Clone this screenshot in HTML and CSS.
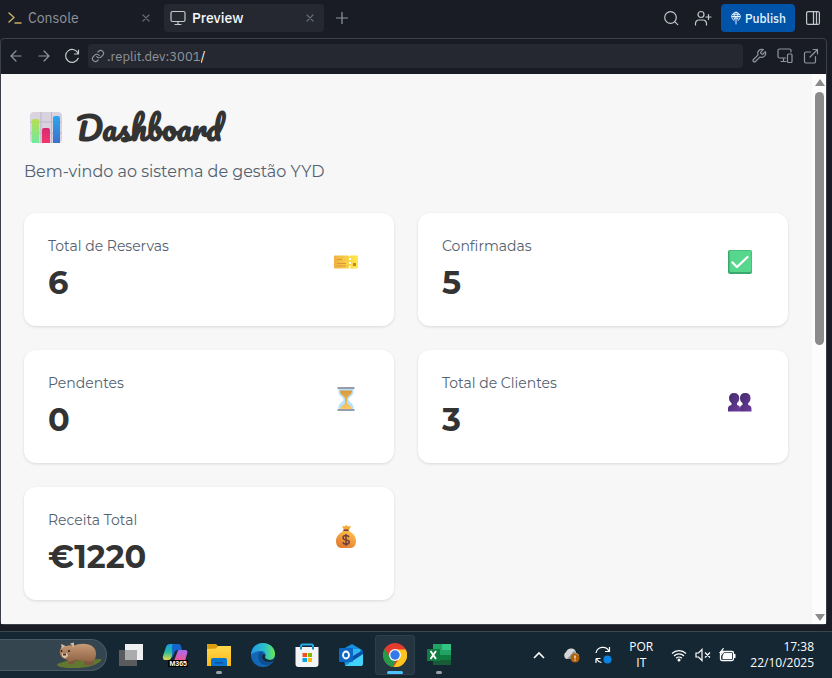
FILE: index.html
```html
<!DOCTYPE html>
<html lang="pt">
<head>
<meta charset="utf-8">
<meta name="viewport" content="width=device-width, initial-scale=1">
<title>Dashboard</title>
<link rel="stylesheet" href="styles.css">
</head>
<body>
<header class="tabbar">
  <nav class="tabs" aria-label="Tabs">
    <div class="tab">
      <button class="tab-name" type="button">
        <svg class="prompt" width="14" height="16" viewBox="0 0 14 16"><path d="M1 3l5 4.500-5 4.500" /><path d="M7 13h6"/></svg>
        Console
      </button>
      <button class="close" type="button" aria-label="Close Console"><svg width="8" height="8" viewBox="0 0 8 8"><path d="M1 1l6 6M7 1L1 7"/></svg></button>
    </div>
    <div class="tab active">
      <button class="tab-name" type="button">
        <svg width="16" height="16" viewBox="0 0 16 16"><rect x="1" y="1.500" width="14" height="10" rx="1.500"/><path d="M8 11.500v3M5 14.500h6"/></svg>
        Preview
      </button>
      <button class="close" type="button" aria-label="Close Preview"><svg width="8" height="8" viewBox="0 0 8 8"><path d="M1 1l6 6M7 1L1 7"/></svg></button>
    </div>
    <button class="icon-btn add" type="button" aria-label="New tab"><svg width="12" height="12" viewBox="0 0 12 12"><path d="M6 0v12M0 6h12"/></svg></button>
  </nav>
  <div class="actions">
    <button class="icon-btn" type="button" aria-label="Search"><svg width="16" height="16" viewBox="0 0 16 16"><circle cx="7.500" cy="7.500" r="5.800"/><path d="M11.700 11.700l3 3"/></svg></button>
    <button class="icon-btn" type="button" aria-label="Invite"><svg width="18" height="16" viewBox="0 0 18 16"><circle cx="7" cy="4.500" r="3"/><path d="M1.500 15v-1.500a3.500 3.500 0 0 1 3.500-3.500h4a3.500 3.500 0 0 1 3.500 3.500V15M14.500 4.500v5M12 7h5"/></svg></button>
    <button class="publish" type="button"><svg width="12" height="14" viewBox="0 0 12 14"><path d="M4 9.500a4.300 4.300 0 1 1 4 0M6 5v8M2 5.500h8M6 1C4 2.500 3.700 5 4.300 8M6 1c2 1.500 2.300 4 1.700 7M3 3.300h6M4.500 8L6 6.500 7.500 8"/></svg>Publish</button>
    <button class="icon-btn" type="button" aria-label="Toggle sidebar"><svg width="14" height="14" viewBox="0 0 14 14"><rect x=".6" y=".6" width="12.800" height="12.800" rx="1.500"/><path d="M7.500 1v12M10.500 1v12"/></svg></button>
  </div>
</header>

<main class="pane">
  <div class="toolbar">
    <div class="history">
      <button class="icon-btn dim" type="button" aria-label="Back"><svg width="12" height="12" viewBox="0 0 12 12"><path d="M11 6H1M6 1L1 6l5 5"/></svg></button>
      <button class="icon-btn dim" type="button" aria-label="Forward"><svg width="12" height="12" viewBox="0 0 12 12"><path d="M1 6h10M6 1l5 5-5 5"/></svg></button>
      <button class="icon-btn" type="button" aria-label="Reload"><svg width="16" height="16" viewBox="0 0 16 16"><path d="M14.500 2v4h-4M14.300 5.800A6.500 6.500 0 1 0 14.200 10.300"/></svg></button>
    </div>
    <form class="address">
      <svg width="14" height="14" viewBox="0 0 24 24"><path d="M10 13a5 5 0 0 0 7.500.5l3-3a5 5 0 0 0-7-7l-1.700 1.700M14 11a5 5 0 0 0-7.500-.5l-3 3a5 5 0 0 0 7 7l1.700-1.700" stroke-width="2"/></svg>
      <label for="path">.replit.dev:3001</label>
      <input id="path" type="text" value="/">
    </form>
    <div class="tools">
      <button class="icon-btn dim" type="button" aria-label="Developer tools"><svg width="16" height="16" viewBox="0 0 24 24"><path stroke-width="1.800" d="M14.700 6.300a1 1 0 0 0 0 1.400l1.600 1.600a1 1 0 0 0 1.400 0l3.800-3.800a6 6 0 0 1-7.900 7.900l-6.900 6.900a2.100 2.100 0 0 1-3-3l6.900-6.900a6 6 0 0 1 7.900-7.900z"/></svg></button>
      <button class="icon-btn dim" type="button" aria-label="Devices"><svg width="16" height="16" viewBox="0 0 16 16"><path d="M8.500 10H2.500A1.500 1.500 0 0 1 1 8.500v-6A1.500 1.500 0 0 1 2.500 1h10A1.500 1.500 0 0 1 14 2.500V4M6.500 10v3.500M4 13.500h5"/><rect x="10.500" y="6" width="4.500" height="8.500" rx="1"/></svg></button>
      <button class="icon-btn dim" type="button" aria-label="Open in new tab"><svg width="16" height="16" viewBox="0 0 16 16"><path d="M12.500 8.500v5a1.500 1.500 0 0 1-1.500 1.500H3A1.500 1.500 0 0 1 1.500 13.500V5.500A1.500 1.500 0 0 1 3 4h4.500M10 1.500h4.500V6M14.500 1.500L7 9"/></svg></button>
    </div>
  </div>

  <div class="viewport">
    <section class="page">
      <h1>
        <svg width="32" height="32" viewBox="0 0 32 32">
          <defs>
            <linearGradient id="bar-g" x2="0" y2="1"><stop stop-color="#b7de50"/><stop offset="1" stop-color="#70eba0"/></linearGradient>
            <linearGradient id="bar-b" x2="0" y2="1"><stop stop-color="#28a8f0"/><stop offset="1" stop-color="#3d70cd"/></linearGradient>
            <linearGradient id="bar-r" x2="0" y2="1"><stop stop-color="#d32d70"/><stop offset="1" stop-color="#f4356f"/></linearGradient>
          </defs>
          <rect y="1" width="32" height="31" rx="4" fill="#d9d3e0"/><path d="M11 1v31M21.500 1v31M0 11h32M0 22h32" stroke="#bdb6c4"/>
          <path d="M2 32V10a2 2 0 0 1 2-2h3a2 2 0 0 1 2 2v22z" fill="url(#bar-g)"/><path d="M12 32V19a2 2 0 0 1 2-2h4a2 2 0 0 1 2 2v13z" fill="url(#bar-r)"/><path d="M23 32V7a2 2 0 0 1 2-2h3a2 2 0 0 1 2 2v25z" fill="url(#bar-b)"/>
        </svg>
        Dashboard
      </h1>
      <p class="lead">Bem-vindo ao sistema de gestão YYD</p>
      <div class="cards">
        <article class="card">
          <div><h2>Total de Reservas</h2><p class="value">6</p></div>
          <div class="emoji"><svg width="26" height="26" viewBox="0 0 26 26">
            <defs><linearGradient id="ticket"><stop stop-color="#efb143"/><stop offset="1" stop-color="#ffea4b"/></linearGradient></defs>
            <path fill="url(#ticket)" d="M2 6.500h13.500l1 1.500 1-1.500H24a1 1 0 0 1 1 1v11a1 1 0 0 1-1 1h-6.500l-1-1.500-1 1.500H2a1 1 0 0 1-1-1v-11a1 1 0 0 1 1-1z"/><path d="M4 10.500h5M4 14.500h9M4 17h9" stroke="#d9973f"/><path d="M17 9v9" stroke="#fff" stroke-width="2" stroke-dasharray="2 2"/><path fill="#c98337" d="M20 14h3v3h-3z"/></svg></div>
        </article>
        <article class="card">
          <div><h2>Confirmadas</h2><p class="value">5</p></div>
          <div class="emoji"><svg width="26" height="26" viewBox="0 0 26 26"><rect x="1" y="1" width="24" height="24" rx="2" fill="#38a86c"/><rect x="2.500" y="1.500" width="22" height="21.500" rx="1.500" fill="#57d68d"/><path d="M5.500 13.500l4.500 4.500L20.500 8" fill="none" stroke="#fff" stroke-width="2.300" stroke-linecap="round" stroke-linejoin="round"/></svg></div>
        </article>
        <article class="card">
          <div><h2>Pendentes</h2><p class="value">0</p></div>
          <div class="emoji"><svg width="26" height="26" viewBox="0 0 26 26">
            <defs><linearGradient id="sand" x2="0" y2="1"><stop stop-color="#d8993a"/><stop offset="1" stop-color="#ffcb63"/></linearGradient></defs>
            <path d="M5.500 3h15v3c0 4-5 5-5 7.500s5 3.500 5 8V24h-15v-2.500c0-4.500 5-5.500 5-8s-5-3.500-5-7.500z" fill="#b7e1fb"/><path d="M7 4.500h12c0 5-4.800 5-5 8.500v5c1.700.8 4.700 2.300 5.200 5.500H7c.5-3.200 3.500-4.700 5-5.500v-5c-.2-3.500-5-3.500-5-8.500z" fill="url(#sand)"/><path d="M4.500 1h17v2h-17zM4.500 23h17v2h-17z" fill="#969caa"/></svg></div>
        </article>
        <article class="card">
          <div><h2>Total de Clientes</h2><p class="value">3</p></div>
          <div class="emoji"><svg width="26" height="26" viewBox="0 0 26 26">
            <defs><linearGradient id="bust" x2="1" y2="1"><stop stop-color="#422b69"/><stop offset="1" stop-color="#6c3b9e"/></linearGradient></defs>
            <path d="M7 7c3.500 0 5.300 2 5.300 5 0 2.300-1 4.200-2.300 5v2c2.500.3 3 2 3 4v2.500H1V23c0-2.500 1-3.700 3.500-4v-2c-1.700-1-2.500-2.700-2.500-5 0-3 1.800-5 5-5z" fill="url(#bust)"/><path d="M18 7c3.700 0 5.500 2 5.500 5 0 2.300-.8 4.200-2.300 5v2c2.300.3 3.300 2 3.300 4v2.500H13V23c0-2.500.5-3.700 2.500-4v-2c-1.700-1-2.500-2.700-2.500-5 0-3 1.800-5 5-5z" fill="url(#bust)"/></svg></div>
        </article>
        <article class="card">
          <div><h2>Receita Total</h2><p class="value">€1220</p></div>
          <div class="emoji"><svg width="26" height="26" viewBox="0 0 26 26">
            <defs><linearGradient id="bag" x1=".7" x2=".2" y2="1"><stop stop-color="#ffc14c"/><stop offset="1" stop-color="#df762f"/></linearGradient></defs>
            <path d="M9 3l2.500.5L13 2l2 1.500L18 3l-2 4h-5z" fill="#f6a834"/><path d="M10.500 7h5l2 2C21 11 23 14 23 18c0 4-2 7-5.500 7h-9C5 25 3 22 3 18c0-4 2.500-7 6-9z" fill="url(#bag)"/><path d="M10.500 6.500h5v1.500h-5z" fill="#693c44"/><path d="M16 14.200c-.4-1.200-1.500-1.700-3-1.700-1.800 0-3 .8-3 2.200 0 3.300 6.200 1.300 6.200 4.300 0 1.500-1.400 2.200-3.200 2.200-1.600 0-2.800-.7-3.200-2M13 11v12" fill="none" stroke="#704139" stroke-width="1.500"/></svg></div>
        </article>
      </div>
    </section>
    <div class="scrollbar" aria-hidden="true">
      <span class="arrow up"></span>
      <div class="track"><div class="thumb"></div></div>
      <span class="arrow down"></span>
    </div>
  </div>
</main>

<footer class="taskbar">
  <button class="search" type="button" aria-label="Search">
    <svg width="46" height="26" viewBox="0 0 46 26">
      <defs><linearGradient id="fur" x2="0" y2="1"><stop stop-color="#c79a76"/><stop offset="1" stop-color="#8e6445"/></linearGradient></defs>
      <path d="M1 22l9-3 35-2c1 2-3 4-7 6-9 4-30 4-36 1z" fill="#62772f"/><path d="M11 16l2 6h5l1-4h8l2 5h8l1-7z" fill="#7c563d"/><path d="M4 8l2-4 4 0c3-1 5-1 7 0 7-3 14-3 19 0 4 3 5 8 3 13l-4 3-7-1-9-1-5 2-5-3c-3-1-6-4-5-9z" fill="url(#fur)"/><path d="M5 2l4 1.500-3 3zM14 1.500l4-1 0 5z" fill="#d8b8a0"/><path d="M6 11h5l1 3-3 2.500-3-2z" fill="#dfc4ab"/><path d="M7 11.500h3v2H7z" fill="#4b3229"/><circle cx="5.500" cy="9" r=".9" fill="#2d211c"/><circle cx="13" cy="9" r="1" fill="#2d211c"/>
    </svg>
  </button>
  <div class="apps">
    <button class="app" type="button" aria-label="Task view"><svg width="24" height="24" viewBox="0 0 24 24"><path fill="#595b5d" d="M0 7h18v16H0z"/><path fill="#eeeff0" d="M6 1h18v16H6z"/><path fill="#a9abac" d="M6 7h12v10H6z"/></svg></button>
    <button class="app" type="button" aria-label="M365 Copilot"><svg width="26" height="26" viewBox="0 0 26 26">
      <defs><linearGradient id="cp-a" x2="0" y2="1"><stop stop-color="#169be9"/><stop offset=".5" stop-color="#25bd9e"/><stop offset="1" stop-color="#e8d74c"/></linearGradient><linearGradient id="cp-b" x2="0" y2="1"><stop stop-color="#a56bf5"/><stop offset="1" stop-color="#f2568a"/></linearGradient></defs>
      <path fill="url(#cp-a)" d="M8 2h9c-3 0-5 4-7 12-1 3-2 4-4 4H3c-2 0-2.500-2-2-4L4 5c.6-2 2-3 4-3z"/><path fill="#1565c9" d="M11 2h5c3 0 3 2 4 6h-4c-2 0-3 1-4 4l-2 4c1-7-1-12 1-14z"/><path fill="url(#cp-b)" d="M17 8h6c2 0 3 1 2 4l-2 7H12l3-8c.4-1.500 1-3 2-3z"/></svg><span class="badge">M365</span></button>
    <button class="app running" type="button" aria-label="Explorer"><svg width="24" height="24" viewBox="0 0 24 24">
      <defs><linearGradient id="fold" x2="0" y2="1"><stop stop-color="#ffd84d"/><stop offset="1" stop-color="#f9b91a"/></linearGradient></defs>
      <path fill="#dc9d0b" d="M0 1h9l3 3v4H0z"/><path fill="url(#fold)" d="M0 6l9-.5L11 3h13v20H0z"/><path fill="#0875ce" d="M4 23v-6a2 2 0 0 1 2-2h12a2 2 0 0 1 2 2v6z"/><path fill="#0f519e" d="M8 19h8v1.500H8z"/></svg></button>
    <button class="app" type="button" aria-label="Edge"><svg width="24" height="24" viewBox="0 0 24 24">
      <defs><linearGradient id="ed-a"><stop stop-color="#2498e8"/><stop offset=".6" stop-color="#2ac3c8"/><stop offset="1" stop-color="#6de848"/></linearGradient></defs>
      <circle cx="12" cy="12" r="12" fill="#1467b7"/><path fill="url(#ed-a)" d="M0 12C0 5 5 0 12 0s12 5 12 11c0 4-3 6-6 6-4 0-5-2-4-3s1-6-4-6c-5 0-9 2-10 4z"/><path fill="#0c4e94" d="M9 9c-3 3-2 9 2 12 4 2 8 1 11-2-5 2-10 0-11-4-.4-2 0-4 1-5z"/><path fill="#152a37" d="M12 11c-2 3-1 7 4 8 3 .5 5-.3 6-1 1.500-1 2.500-2 2-3l-2 1.500c-3 1-7 0-8-2-.3-1 .8-1.500 0-3z"/></svg></button>
    <button class="app" type="button" aria-label="Store"><svg width="24" height="24" viewBox="0 0 24 24"><path d="M6 7V3a1.500 1.500 0 0 1 1.500-1.500h9A1.500 1.500 0 0 1 18 3v4" fill="none" stroke="#25aee8" stroke-width="2"/><path fill="#f3f4f5" d="M.5 4h23v17a3 3 0 0 1-3 3h-17a3 3 0 0 1-3-3z"/><path d="M6 4v2.500M18 4v2.500" stroke="#1b86c0" stroke-width="2"/><path fill="#f25022" d="M7.500 10H12v4H7.500z"/><path fill="#7fba00" d="M13 10h4v4h-4z"/><path fill="#00a4ef" d="M7.500 15H12v4H7.500z"/><path fill="#ffb900" d="M13 15h4v4h-4z"/></svg></button>
    <button class="app" type="button" aria-label="Outlook"><svg width="24" height="24" viewBox="0 0 24 24"><path fill="#1490df" d="M4 6l9-5 10 6v14a2 2 0 0 1-2 2H6z"/><path fill="#32b7ee" d="M6 6h15v7l-9 5z"/><path fill="#0b4ea6" d="M14 13l10-6v5L14 18z"/><path fill="#43d3fa" d="M24 11v10a2 2 0 0 1-2 2H6z"/><rect y="5" width="14" height="14" rx="1" fill="#0c68c6"/><ellipse cx="7" cy="12" rx="3" ry="3.500" fill="none" stroke="#fff" stroke-width="1.800"/></svg></button>
    <button class="app current" type="button" aria-label="Chrome"><svg width="24" height="24" viewBox="0 0 24 24"><circle cx="12" cy="12" r="12" fill="#e33b2e"/><path fill="#249a4b" d="M1.600 6L7.500 15l4.500 3-1.500 6A12 12 0 0 1 1.600 6z"/><path fill="#fbc51b" d="M12 6.500h10.700A12 12 0 0 1 10.500 24L17 14z"/><circle cx="12" cy="12" r="6" fill="#f5f7f8"/><circle cx="12" cy="12" r="4.700" fill="#3479e8"/></svg></button>
    <button class="app running" type="button" aria-label="Excel"><svg width="24" height="24" viewBox="0 0 24 24"><path fill="#21a366" d="M6 1h18v21H6z"/><path fill="#33c481" d="M15 1h9v6h-9z"/><path fill="#107c41" d="M6 12h9v6H6zM15 12h9v5h-9z"/><path fill="#185c37" d="M6 17h18v5H6z"/><path fill="#107c41" d="M0 6h13v12H0z"/><path d="M3.500 8l5.500 8M9 8l-5.500 8" stroke="#fff" stroke-width="1.900"/></svg></button>
  </div>
  <div class="tray">
    <button class="tray-btn" type="button" aria-label="Hidden icons"><svg width="12" height="8" viewBox="0 0 12 8"><path d="M1 7l5-5 5 5" fill="none" stroke="#fff" stroke-width="1.600"/></svg></button>
    <button class="tray-btn" type="button" aria-label="Cloud storage"><svg width="18" height="16" viewBox="0 0 18 16"><path d="M4.500 12a4 4 0 0 1-.5-7C5 2.500 7 1.500 9 1.500c3 0 5 2 5 4.500 2 .5 3 1.500 3 3S16 12 14 12z" fill="#d4d6d7"/><path d="M5 12L12 4c2 1 2 3 2 4l3 2-3 2z" fill="#929799"/><circle cx="13" cy="11" r="4.500" fill="#b35f05"/><path d="M13 8.500v3M13 12.500v1.200" stroke="#fff" stroke-width="1.200"/></svg></button>
    <button class="tray-btn" type="button" aria-label="Update"><svg width="18" height="18" viewBox="0 0 18 18"><path d="M2 7a7 7 0 0 1 13-2M15.500 1v4.500H11M2 12.500h4.500M2 12.500V17M2.500 13a7 7 0 0 0 5 3.500" fill="none" stroke="#fff" stroke-width="1.200"/><circle cx="13.500" cy="13.500" r="4" fill="#0a84e4"/></svg></button>
    <button class="lang" type="button">POR<br>IT</button>
    <button class="status" type="button" aria-label="Network, sound and battery">
      <svg width="16" height="14" viewBox="0 0 16 14"><path d="M1 5.500a10 10 0 0 1 14 0M3 8a7 7 0 0 1 10 0M5.200 10.300a4 4 0 0 1 5.600 0" fill="none" stroke="#fff" stroke-width="1.300"/><circle cx="8" cy="12" r="1.500" fill="#fff"/></svg>
      <svg width="16" height="14" viewBox="0 0 16 14"><path d="M1 5h2.500L7 1.500v11L3.500 9H1zM10 4.500l5 5M15 4.500l-5 5" fill="none" stroke="#fff" stroke-width="1.200"/></svg>
      <svg width="17" height="14" viewBox="0 0 17 14"><rect x="1.500" y="3.500" width="13" height="9" rx="1.500" fill="none" stroke="#fff" stroke-width="1.300"/><path d="M5 5h8v6H3.500V8zM15 6h1.500v4H15z" fill="#fff"/><path d="M4 0L0 5h2.500L1 9l5-6H3.500L5 0z" fill="#fff"/></svg>
    </button>
    <button class="clock" type="button"><time datetime="2025-10-22T17:38">17:38<br>22/10/2025</time></button>
  </div>
</footer>
</body>
</html>
```
FILE: styles.css
```css
* { box-sizing: border-box; }

body {
  margin: 0;
  min-height: 100vh;
  display: flex;
  flex-direction: column;
  background: #191c25;
  color: #c2c8cc;
  font-family: "IBM Plex Sans", "Noto Sans", sans-serif;
  font-size: 14px;
}

button {
  font: inherit;
  color: inherit;
  background: none;
  border: 0;
  padding: 0;
}

svg { display: block; flex: none; }

.tabbar svg, .toolbar svg {
  fill: none;
  stroke: currentColor;
  stroke-width: 1.2;
  stroke-linecap: round;
  stroke-linejoin: round;
}

/* Tabs */
.tabbar {
  height: 38px;
  padding: 4px 5px 6px 4px;
  display: flex;
  justify-content: space-between;
}

.tabs, .actions { display: flex; align-items: center; }
.tabs { gap: 4px; }

.tab {
  width: 156px;
  height: 28px;
  padding: 0 10px 0 4px;
  display: flex;
  align-items: center;
  justify-content: space-between;
  border-radius: 4px;
  color: #8f949b;
}

.tab.active { width: 160px; padding-left: 6px; background: #252830; color: #f5f9fc; }
.tab-name { display: flex; align-items: center; gap: 6px; }
.tab.active .tab-name { font-weight: 500; }
.tab.active .tab-name svg { color: #c2c8cc; }
.tab .prompt { stroke: #c5ac65; stroke-width: 1.5; }
.close { color: #666b74; }

.icon-btn { width: 28px; height: 28px; display: grid; place-items: center; }
.add { color: #9096a0; }
.dim { color: #9096a0; }

.actions { gap: 4px; }

.publish {
  height: 28px;
  padding: 0 9px;
  display: flex;
  align-items: center;
  gap: 3px;
  border-radius: 4px;
  background: #0053a6;
  color: #e5f2ff;
  font-size: 12px;
  font-weight: 500;
}

.publish svg { stroke-width: 1; }

/* Preview pane */
.pane {
  flex: 1;
  margin-right: 5px;
  display: flex;
  flex-direction: column;
  border: 1px solid #3c4049;
  border-radius: 4px;
}

.toolbar { height: 35px; padding-bottom: 1px; display: flex; align-items: center; }
.history { display: flex; padding-left: 1px; }

.address {
  flex: 1;
  height: 24px;
  margin-left: 2px;
  padding: 0 3px;
  display: flex;
  align-items: center;
  border-radius: 4px;
  background: #252830;
  color: #8f949b;
  font-size: 13px;
}

.address label { padding-left: 2px; }

.address input {
  flex: 1;
  min-width: 0;
  padding: 0;
  border: 0;
  outline: 0;
  background: none;
  color: #f5f9fc;
  font: inherit;
}

.tools { display: flex; padding: 0 2px 0 3px; }
.tools .icon-btn { width: 26px; }

.viewport {
  flex: 1;
  display: flex;
  background: #f7f7f7;
  color: #333;
  font-family: Montserrat, Inter, sans-serif;
}

.page { flex: 1; padding: 24px 24px 24px 23px; }

h1 {
  height: 60px;
  margin: 0;
  padding: 0 0 2px 6px;
  display: flex;
  align-items: center;
  gap: 14px;
  font-family: Pacifico, Lato, cursive;
  font-size: 32px;
  font-weight: 700;
  line-height: 40px;
}

.lead { margin: 0 0 28px; font-size: 16px; line-height: 27px; color: #536170; }

.cards {
  display: grid;
  grid-template-columns: repeat(2, 1fr);
  gap: 24px;
}

.card {
  padding: 25px 24px 23px;
  display: flex;
  justify-content: space-between;
  border-radius: 12px;
  background: #fff;
  box-shadow: 0 1px 3px rgba(0, 0, 0, .12);
}

.card h2 {
  margin: 0 0 8px;
  font-size: 14px;
  font-weight: 400;
  line-height: 17px;
  color: #536170;
}

.value { margin: 0; font-size: 32px; font-weight: 700; line-height: 40px; }
.emoji { width: 48px; height: 48px; display: grid; place-items: center; }

.scrollbar {
  width: 14px;
  padding: 5px 2px 3px 3px;
  display: flex;
  flex-direction: column;
  align-items: center;
  gap: 6px;
  background: #fcfcfc;
}

.arrow { border: 5px solid transparent; border-top-width: 0; border-bottom: 7px solid #8b8b8b; }
.arrow.down { transform: rotate(180deg); }
.track { flex: 1; width: 9px; }
.thumb { height: 49%; border-radius: 5px; background: #8b8b8b; }

/* Taskbar */
.taskbar {
  height: 47px;
  margin-top: 6px;
  padding-right: 18px;
  display: flex;
  align-items: center;
  border-top: 1px solid #3c464d;
  background: #142733;
  color: #fff;
  font-family: "Segoe UI", "Open Sans", sans-serif;
  font-size: 12px;
}

.search {
  width: 107px;
  height: 32px;
  padding-right: 4px;
  display: flex;
  align-items: center;
  justify-content: flex-end;
  border: 1px solid #4b5a65;
  border-left: 0;
  border-radius: 0 16px 16px 0;
  background: #344550;
}

.apps { display: flex; gap: 4px; margin-left: 4px; }

.app {
  position: relative;
  width: 40px;
  height: 40px;
  display: grid;
  place-items: center;
  border-radius: 4px;
}

.current { background: #243541; box-shadow: inset 0 0 0 1px #2f404b; }

.running::after, .current::after {
  content: "";
  position: absolute;
  bottom: 1px;
  left: 17px;
  width: 6px;
  height: 3px;
  border-radius: 2px;
  background: #9aa2a8;
}

.current::after { left: 12px; width: 16px; background: #4cc2ff; }

.badge {
  position: absolute;
  right: 7px;
  bottom: 8px;
  padding: 0 1px;
  background: #000;
  font-family: "Liberation Sans", sans-serif;
  font-size: 7px;
  font-weight: 700;
  line-height: 7px;
}

.tray { margin-left: auto; display: flex; align-items: center; }
.tray-btn { width: 32px; height: 40px; display: grid; place-items: center; }
.lang { width: 44px; line-height: 16px; text-align: center; }
.status { display: flex; gap: 8px; padding: 0 8px; }
.clock { padding-left: 6px; line-height: 16px; text-align: right; }
```
